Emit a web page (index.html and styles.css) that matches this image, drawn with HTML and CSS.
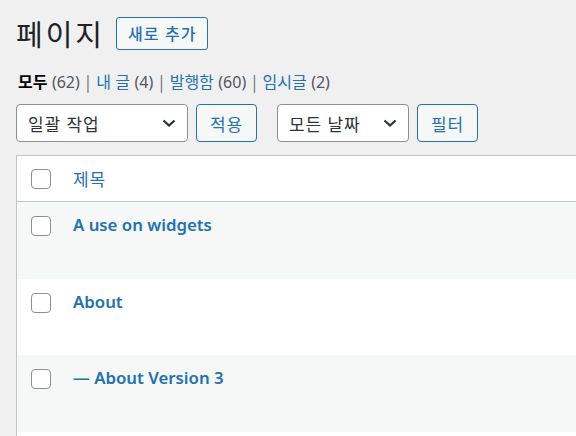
FILE: index.html
```html
<!DOCTYPE html>
<html lang="ko">
<head>
    <meta charset="UTF-8">
    <meta name="viewport" content="width=device-width, initial-scale=1.0">
    <title>페이지</title>
    <link rel="stylesheet" href="styles.css">
</head>
<body>
    <div class="wrap">
        <div class="page-head">
            <h1>페이지</h1>
            <a href="#" class="btn-add">새로 추가</a>
        </div>

        <ul class="subsubsub">
            <li class="current">모두 <span class="count">(62)</span></li>
            <li class="sep">|</li>
            <li><a href="#">내 글 <span class="count">(4)</span></a></li>
            <li class="sep">|</li>
            <li><a href="#">발행함 <span class="count">(60)</span></a></li>
            <li class="sep">|</li>
            <li><a href="#">임시글 <span class="count">(2)</span></a></li>
        </ul>

        <div class="tablenav">
            <div class="select bulk">
                <span>일괄 작업</span>
                <svg class="chevron" width="14" height="8" viewBox="0 0 14 8"><path d="M1.5 1.5 L7 6.5 L12.5 1.5" fill="none" stroke="#2c3338" stroke-width="2.2"/></svg>
            </div>
            <button class="btn">적용</button>
            <div class="select dates">
                <span>모든 날짜</span>
                <svg class="chevron" width="14" height="8" viewBox="0 0 14 8"><path d="M1.5 1.5 L7 6.5 L12.5 1.5" fill="none" stroke="#2c3338" stroke-width="2.2"/></svg>
            </div>
            <button class="btn">필터</button>
        </div>

        <table class="list">
            <thead>
                <tr>
                    <th class="check"><span class="box"></span></th>
                    <th class="title"><a href="#">제목</a></th>
                </tr>
            </thead>
            <tbody>
                <tr class="alt">
                    <td class="check"><span class="box"></span></td>
                    <td class="title"><a href="#">A use on widgets</a></td>
                </tr>
                <tr>
                    <td class="check"><span class="box"></span></td>
                    <td class="title"><a href="#">About</a></td>
                </tr>
                <tr class="alt">
                    <td class="check"><span class="box"></span></td>
                    <td class="title"><a href="#">— About Version 3</a></td>
                </tr>
                <tr>
                    <td class="check"></td>
                    <td class="title"></td>
                </tr>
            </tbody>
        </table>
    </div>
</body>
</html>
```

FILE: styles.css
```css
body {
    font-family: 'Noto Sans', 'Noto Sans CJK KR', sans-serif;
    background-color: #f0f0f1;
    color: #3c434a;
    margin: 0;
    overflow: hidden;
}
.wrap {
    padding: 16px 0 0 16px;
    width: 600px;
}
a {
    color: #2271b1;
    text-decoration: none;
}
.page-head {
    display: flex;
    align-items: center;
    gap: 11px;
    height: 34px;
}
h1 {
    margin: 0;
    font-family: 'Noto Sans CJK KR', sans-serif;
    font-size: 29px;
    font-weight: 400;
    letter-spacing: 3px;
    line-height: 34px;
    color: #1d2327;
}
.btn-add {
    display: inline-flex;
    align-items: center;
    height: 31px;
    padding: 0 11px;
    border: 1px solid #2271b1;
    border-radius: 3px;
    background-color: #f6f7f7;
    font-family: 'Noto Sans CJK KR', sans-serif;
    font-size: 16px;
    font-weight: 500;
    letter-spacing: 1px;
}
.subsubsub {
    list-style: none;
    display: flex;
    gap: 6px;
    margin: 20px 0 0 2px;
    padding: 0;
    font-size: 16px;
    line-height: 22px;
    color: #50575e;
}
.subsubsub li {
    font-family: 'Noto Sans CJK KR', sans-serif;
}
.subsubsub .current {
    color: #000;
    font-weight: 700;
}
.subsubsub .count {
    font-family: 'Noto Sans', sans-serif;
    font-weight: 400;
    color: #50575e;
}
.subsubsub .sep {
    color: #646970;
}
.tablenav {
    display: flex;
    align-items: center;
    margin-top: 11px;
    height: 38px;
}
.select {
    box-sizing: border-box;
    display: flex;
    align-items: center;
    justify-content: space-between;
    height: 38px;
    padding: 0 11px;
    border: 1px solid #8c8f94;
    border-radius: 4px;
    background-color: #fff;
    font-family: 'Noto Sans CJK KR', sans-serif;
    font-size: 17px;
    letter-spacing: 0.8px;
    color: #2c3338;
}
.select.bulk {
    width: 172px;
    margin-right: 8px;
}
.select.dates {
    width: 132px;
    margin-right: 8px;
}
.btn {
    box-sizing: border-box;
    height: 38px;
    width: 61px;
    margin-right: 20px;
    padding: 0;
    border: 1px solid #2271b1;
    border-radius: 4px;
    background-color: #f6f7f7;
    color: #2271b1;
    font-family: 'Noto Sans CJK KR', sans-serif;
    font-size: 17px;
    letter-spacing: 0.8px;
}
.list {
    margin-top: 13px;
    width: 600px;
    border: 1px solid #c3c4c7;
    border-spacing: 0;
    background-color: #fff;
}
.list th,
.list td {
    padding: 0;
    text-align: left;
    vertical-align: top;
}
.list thead th {
    height: 45px;
    vertical-align: middle;
    border-bottom: 1px solid #c3c4c7;
}
.list .check {
    width: 42px;
    padding-left: 14px;
}
.box {
    display: block;
    box-sizing: border-box;
    width: 20px;
    height: 20px;
    border: 1px solid #8c8f94;
    border-radius: 4px;
    background-color: #fff;
}
.list thead .box {
    margin-top: 1px;
}
.list thead .title a {
    font-family: 'Noto Sans CJK KR', sans-serif;
    font-size: 17px;
    font-weight: 400;
    letter-spacing: 0.8px;
}
.list tbody td {
    height: 76.5px;
}
.list tbody .box {
    margin-top: 14px;
}
.list tbody .title a {
    display: block;
    margin-top: 11px;
    font-size: 16.8px;
    font-weight: 600;
    line-height: 24px;
}
.list tbody tr.alt {
    background-color: #f6f7f7;
}
```
